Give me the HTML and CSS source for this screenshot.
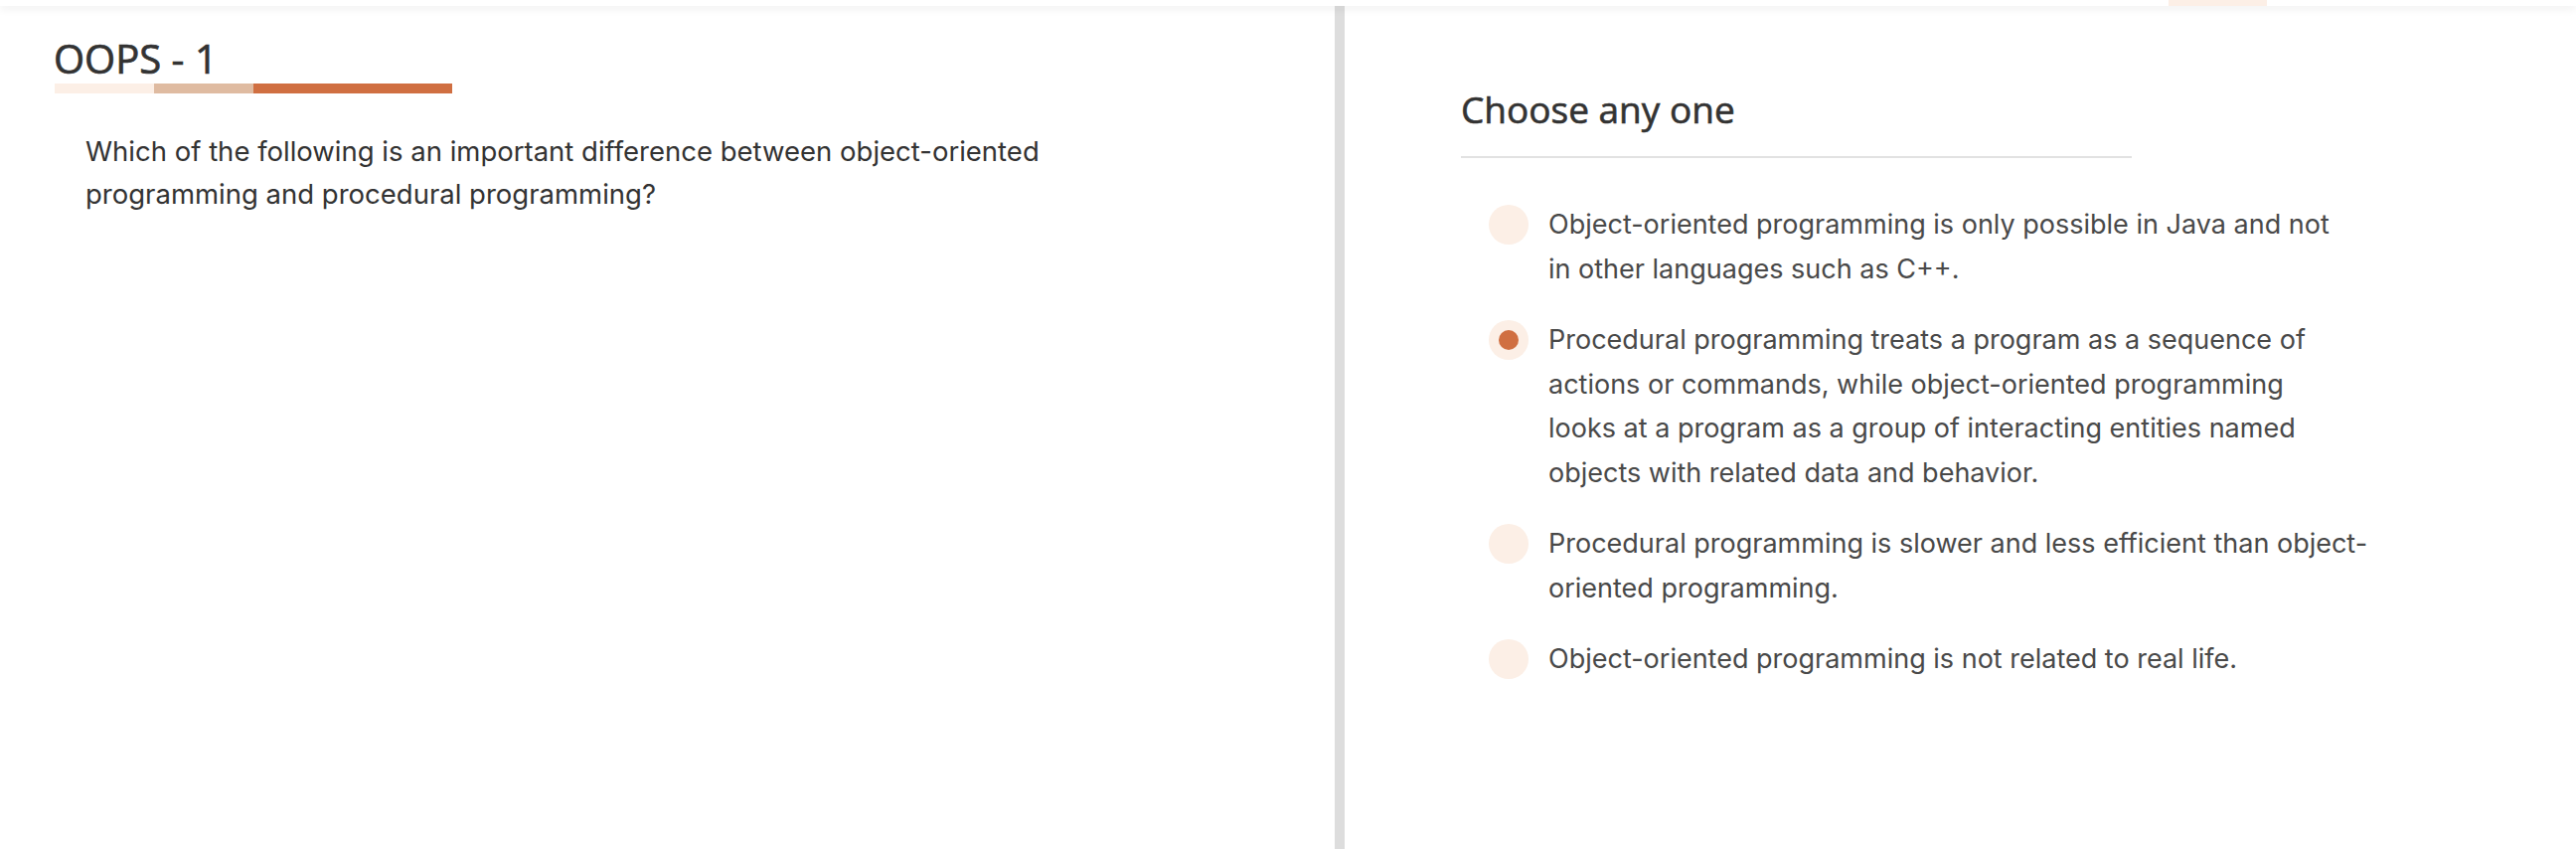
FILE: index.html
```html
<!DOCTYPE html>
<html lang="en">
<head>
<meta charset="utf-8">
<title>OOPS - 1</title>
<link rel="stylesheet" href="styles.css">
</head>
<body>
<header class="topbar">
  <div class="topbar-tab"></div>
</header>
<main class="layout">
  <section class="question-pane">
    <h1 class="title">OOPS - 1</h1>
    <div class="title-bar">
      <span class="seg seg-light"></span>
      <span class="seg seg-mid"></span>
      <span class="seg seg-dark"></span>
    </div>
    <p class="question">Which of the following is an important difference between object-oriented programming and procedural programming?</p>
  </section>
  <div class="divider"></div>
  <section class="answer-pane">
    <h2 class="choose">Choose any one</h2>
    <ul class="options">
      <li class="option">
        <span class="radio"></span>
        <span class="option-text">Object-oriented programming is only possible in Java and not in other languages such as C++.</span>
      </li>
      <li class="option selected">
        <span class="radio"><span class="radio-dot"></span></span>
        <span class="option-text">Procedural programming treats a program as a sequence of actions or commands, while object-oriented programming looks at a program as a group of interacting entities named objects with related data and behavior.</span>
      </li>
      <li class="option">
        <span class="radio"></span>
        <span class="option-text option-text-wide">Procedural programming is slower and less efficient than object-oriented programming.</span>
      </li>
      <li class="option">
        <span class="radio"></span>
        <span class="option-text">Object-oriented programming is not related to real life.</span>
      </li>
    </ul>
  </section>
</main>
</body>
</html>
```

FILE: styles.css
```css
* { box-sizing: border-box; }

html, body {
  margin: 0;
  padding: 0;
  background: #ffffff;
  height: 100%;
  overflow: hidden;
}

body {
  font-family: "Inter", "Roboto", sans-serif;
  color: #333333;
  display: flex;
  flex-direction: column;
}

.topbar {
  height: 6px;
  flex: 0 0 6px;
  background: #ffffff;
  box-shadow: 0 3px 9px rgba(0, 0, 0, 0.07);
  position: relative;
  z-index: 2;
  display: flex;
  padding-left: 2182px;
}

.topbar-tab {
  width: 99px;
  height: 6px;
  background: #fcefe6;
}

.layout {
  flex: 1;
  display: flex;
  min-height: 0;
}

.question-pane {
  width: 1343px;
  flex: 0 0 1343px;
  padding: 29px 0 0 54px;
}

.title {
  margin: 0;
  font-family: "Open Sans", sans-serif;
  font-weight: 400;
  -webkit-text-stroke: 0.7px #333333;
  font-size: 40px;
  line-height: 48px;
  color: #333333;
}

.title-bar {
  display: flex;
  margin: 1px 0 0 1px;
  height: 10px;
}

.seg { display: block; height: 10px; }
.seg-light { width: 100px; background: #fcefe6; }
.seg-mid { width: 100px; background: #dfbba1; }
.seg-dark { width: 200px; background: #d06f41; }

.question {
  margin: 37px 0 0 32px;
  width: 1030px;
  font-size: 27.5px;
  line-height: 43px;
  color: #333333;
}

.divider {
  width: 10px;
  flex: 0 0 10px;
  background: #dddddd;
}

.answer-pane {
  flex: 1;
  padding: 82px 0 0 117px;
}

.choose {
  margin: 0;
  width: 675px;
  font-family: "Open Sans", sans-serif;
  font-weight: 400;
  -webkit-text-stroke: 0.6px #333333;
  font-size: 37px;
  line-height: 44px;
  color: #333333;
  padding-bottom: 25px;
  border-bottom: 2px solid #e2e2e2;
}

.options {
  list-style: none;
  margin: 45px 0 0 0;
  padding: 0 0 0 28px;
  display: flex;
  flex-direction: column;
  gap: 27px;
}

.option {
  display: flex;
  align-items: flex-start;
  gap: 20px;
}

.radio {
  flex: 0 0 40px;
  width: 40px;
  height: 40px;
  margin-top: 2px;
  border-radius: 50%;
  background: #fcefe6;
  display: flex;
  align-items: center;
  justify-content: center;
}

.radio-dot {
  width: 20px;
  height: 20px;
  border-radius: 50%;
  background: #d06f41;
}

.option-text {
  width: 812px;
  font-size: 27px;
  line-height: 44.5px;
  color: #494949;
}

.option-text-wide {
  width: 832px;
}
```
